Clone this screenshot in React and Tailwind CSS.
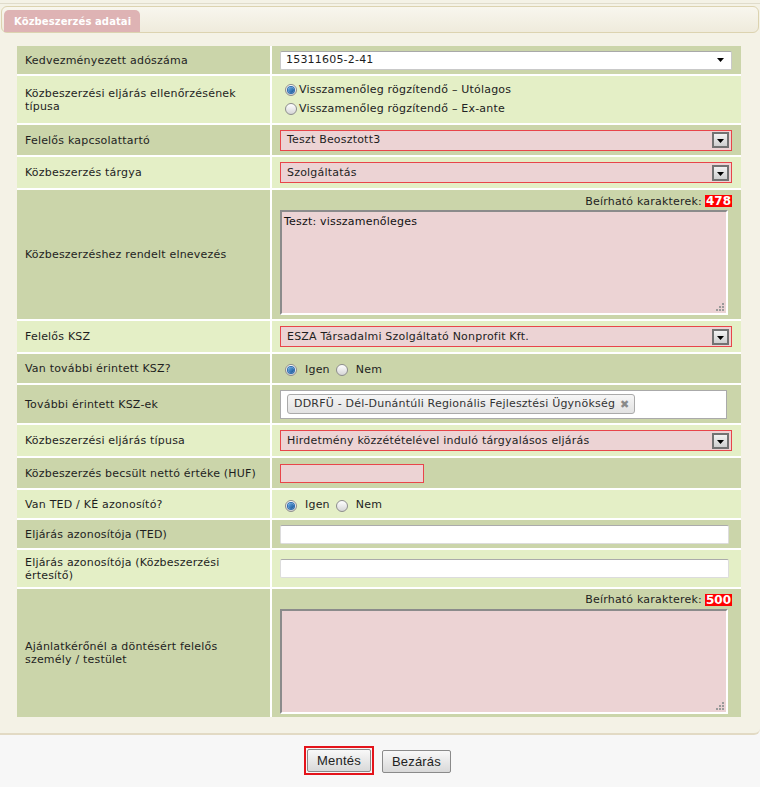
const rows = [
  { label: 'Kedvezményezett adószáma', tone: 'dark', h: 'h-[28px]', kind: 'plainSelect', value: '15311605-2-41' },
  { label: 'Közbeszerzési eljárás ellenőrzésének típusa', tone: 'light', h: 'h-[47px]', kind: 'radioStack' },
  { label: 'Felelős kapcsolattartó', tone: 'dark', h: 'h-[30px]', kind: 'select', value: 'Teszt Beosztott3' },
  { label: 'Közbeszerzés tárgya', tone: 'light', h: 'h-[31px]', kind: 'select', value: 'Szolgáltatás' },
  { label: 'Közbeszerzéshez rendelt elnevezés', tone: 'dark', h: 'h-[129px]', kind: 'textarea', count: '478', value: 'Teszt: visszamenőleges' },
  { label: 'Felelős KSZ', tone: 'light', h: 'h-[31px]', kind: 'select', value: 'ESZA Társadalmi Szolgáltató Nonprofit Kft.' },
  { label: 'Van további érintett KSZ?', tone: 'dark', h: 'h-[29px]', kind: 'yesNo' },
  { label: 'További érintett KSZ-ek', tone: 'dark', h: 'h-[38px]', kind: 'chips' },
  { label: 'Közbeszerzési eljárás típusa', tone: 'light', h: 'h-[31px]', kind: 'select', value: 'Hirdetmény közzétételével induló tárgyalásos eljárás' },
  { label: 'Közbeszerzés becsült nettó értéke (HUF)', tone: 'dark', h: 'h-[30px]', kind: 'smallInput' },
  { label: 'Van TED / KÉ azonosító?', tone: 'light', h: 'h-[28px]', kind: 'yesNo' },
  { label: 'Eljárás azonosítója (TED)', tone: 'dark', h: 'h-[28px]', kind: 'input' },
  { label: 'Eljárás azonosítója (Közbeszerzési értesítő)', tone: 'light', h: 'h-[37px]', kind: 'input' },
  { label: 'Ajánlatkérőnél a döntésért felelős személy / testület', tone: 'dark', h: 'h-[128px]', kind: 'textarea', count: '500', value: '' },
];

function Radio({ checked }) {
  return (
    <span className="relative inline-flex h-[12px] w-[12px] shrink-0 items-center justify-center rounded-full border border-[#8d8d8d] bg-gradient-to-b from-[#ffffff] to-[#d6d6d6]">
      {checked && <span className="h-[6px] w-[6px] rounded-full bg-gradient-to-br from-[#6fb2ea] to-[#0d4f92] shadow-[0_0_0_1px_#2a6bb0]" />}
    </span>
  );
}

function ArrowBox() {
  return (
    <span className="flex h-[16px] w-[17px] items-end justify-center border-2 border-[#727272] bg-gradient-to-b from-[#f2f2f2] to-[#cfcfcf] pb-[3px]">
      <svg width="7" height="4" viewBox="0 0 7 4"><path d="M0 0h7L3.5 4z" fill="#000" /></svg>
    </span>
  );
}

function Field({ row }) {
  switch (row.kind) {
    case 'plainSelect':
      return (
        <div className="flex h-[19px] w-[452px] items-center justify-between rounded-[2px] border border-[#c9c9c9] border-t-[#a9a9a9] bg-white pl-[5px] pr-[7px]">
          <span>{row.value}</span>
          <svg width="7" height="4" viewBox="0 0 7 4"><path d="M0 0h7L3.5 4z" fill="#000" /></svg>
        </div>
      );
    case 'select':
      return (
        <div className="flex h-[21px] w-[452px] items-center justify-between border border-[#e8454a] bg-[#ecd3d4] pl-[6px] pr-[2px]">
          <span className="pt-[1px]">{row.value}</span>
          <ArrowBox />
        </div>
      );
    case 'radioStack':
      return (
        <div className="flex flex-col gap-[3px] pl-[5px] text-[#222]">
          <label className="flex items-center gap-[2px]"><Radio checked />Visszamenőleg rögzítendő – Utólagos</label>
          <label className="flex items-center gap-[2px]"><Radio />Visszamenőleg rögzítendő – Ex-ante</label>
        </div>
      );
    case 'yesNo':
      return (
        <div className="flex items-center pl-[5px] pt-[3px]">
          <Radio checked />
          <span className="ml-[8px] mr-[6px]">Igen</span>
          <Radio />
          <span className="ml-[8px]">Nem</span>
        </div>
      );
    case 'chips':
      return (
        <div className="flex h-[29px] w-[447px] items-center border border-[#aaaaaa] bg-white pl-[6px]">
          <span className="flex h-[20px] items-center gap-[5px] rounded-[3px] border border-[#aaaaaa] bg-gradient-to-b from-[#f6f6f6] to-[#e2e2e2] pl-[6px] pr-[4px] text-[#333]">
            DDRFÜ - Dél-Dunántúli Regionális Fejlesztési Ügynökség
            <span className="text-[11px] font-bold leading-none text-[#8a8a8a]">✖</span>
          </span>
        </div>
      );
    case 'smallInput':
      return <div className="h-[19px] w-[144px] border border-[#e8454a] bg-[#ecd3d4]" />;
    case 'input':
      return <div className="h-[19px] w-[449px] rounded-[2px] border border-[#dcdcdc] border-t-[#ababab] bg-white" />;
    case 'textarea':
      return (
        <div className="flex w-[452px] flex-col">
          <div className="flex h-[14px] items-center justify-end gap-[3px] leading-none">
            <span>Beírható karakterek:</span>
            <span className="bg-[#ff0000] px-[1px] text-[12px] font-bold tracking-normal text-white">{row.count}</span>
          </div>
          <div className="relative mt-[2px] h-[105px] w-[448px] border-2 border-[#8b8b8b] border-b-white border-r-white bg-[#ecd3d4] px-[2px] pt-[2px] text-[#111]">
            {row.value}
            <svg className="absolute bottom-[2px] right-[2px]" width="8" height="8" viewBox="0 0 8 8" fill="#9a9a9a">
              <rect x="6" y="0" width="2" height="2" />
              <rect x="3" y="3" width="2" height="2" />
              <rect x="6" y="3" width="2" height="2" />
              <rect x="0" y="6" width="2" height="2" />
              <rect x="3" y="6" width="2" height="2" />
              <rect x="6" y="6" width="2" height="2" />
            </svg>
          </div>
        </div>
      );
    default:
      return null;
  }
}

export default function App() {
  return (
    <div className="h-[787px] w-[760px] bg-[#f7f7f7] font-['DejaVu_Sans',Verdana,sans-serif] text-[11px] tracking-[0.2px] text-[#1e1e1e]">
      <div className="rounded-br-[6px] border-b-2 border-[#e2dac4] bg-[#f4f2e6] pb-[16px] pt-[3px]">
        <div className="border-t border-[#e0dccb]" />
        <div className="mx-[1px] mt-[2px] flex h-[27px] items-end rounded-[6px] border border-[#dcd3b0] bg-gradient-to-b from-[#f8f6ee] to-[#efebdc] pl-[2px]">
          <div className="flex h-[22px] items-center rounded-t-[5px] bg-[#deb3b4] pl-[10px] pr-[9px] text-[10px] font-bold tracking-[0.1px] text-white">
            Közbeszerzés adatai
          </div>
        </div>
        <div className="ml-[17px] mt-[13px] flex w-[724px] flex-col gap-[2px] bg-white">
          {rows.map((row) => {
            const bg = row.tone === 'dark' ? 'bg-[#cbd5aa]' : 'bg-[#e4efc6]';
            return (
              <div key={row.label} className={`grid grid-cols-[253px_1fr] gap-[2px] ${row.h}`}>
                <div className={`flex items-center pl-[8px] pr-[12px] leading-[13px] ${bg}`}>{row.label}</div>
                <div className={`flex items-center pl-[8px] ${bg}`}>
                  <Field row={row} />
                </div>
              </div>
            );
          })}
        </div>
      </div>
      <div className="flex justify-center gap-[8px] pr-[5px] pt-[11px] font-['Liberation_Sans',Arial,sans-serif] text-[13px] text-[#222]">
        <div className="border-2 border-[#e4141b] p-[1px]">
          <button className="h-[23px] rounded-[2px] border border-[#8a8a8a] bg-gradient-to-b from-[#f8f8f8] to-[#d9d9d9] px-[9px]">Mentés</button>
        </div>
        <button className="mt-[4px] h-[23px] rounded-[2px] border border-[#8a8a8a] bg-gradient-to-b from-[#f8f8f8] to-[#d9d9d9] px-[9px]">Bezárás</button>
      </div>
    </div>
  );
}
